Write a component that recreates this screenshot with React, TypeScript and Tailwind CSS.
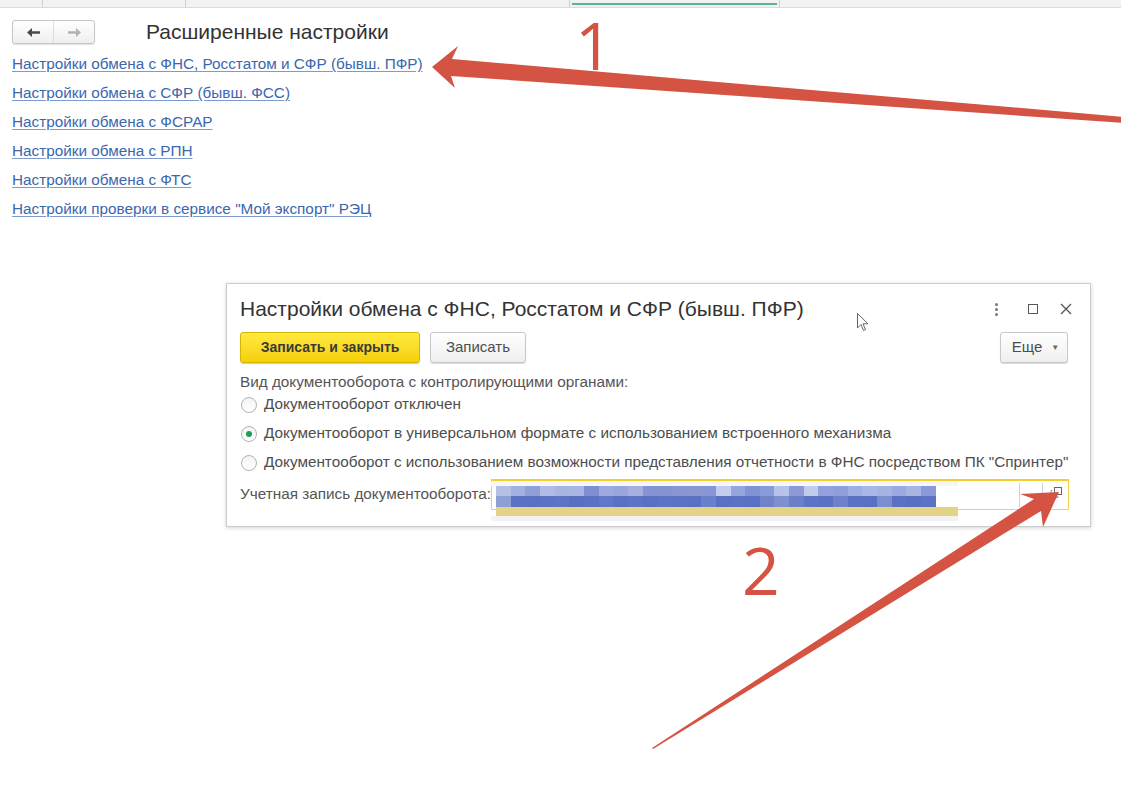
import React from 'react';

const links = [
    'Настройки обмена с ФНС, Росстатом и СФР (бывш. ПФР)',
    'Настройки обмена с СФР (бывш. ФСС)',
    'Настройки обмена с ФСРАР',
    'Настройки обмена с РПН',
    'Настройки обмена с ФТС',
    'Настройки проверки в сервисе "Мой экспорт" РЭЦ',
];

const radios = [
    { label: 'Документооборот отключен', checked: false },
    { label: 'Документооборот в универсальном формате с использованием встроенного механизма', checked: true },
    {
        label: 'Документооборот с использованием возможности представления отчетности в ФНС посредством ПК "Спринтер"',
        checked: false,
    },
];

// pixelated (blurred) account name
const topRow = [
    '#b4c0e6', '#a3b1e0', '#8fa0d8', '#b0bbe6', '#a8b4e2', '#a9b5e2', '#7f90d2', '#9eaadf', '#98a6dd', '#a5b0e0',
    '#8493d3', '#8593d2', '#8a96d4', '#8c97d2', '#8797d6', '#c2cdf0', '#95a6de', '#8093d5', '#8a9bd9', '#b7c3ea',
    '#8e9ad6', '#c0cbee', '#93a2dd', '#8e9fdb', '#9eb0e2', '#a8b8e6', '#a5b2e2', '#9aaae0', '#a8b4e2', '#8a9ad8',
];
const bottomRow = [
    '#8d9fd6', '#5b71c4', '#5a70c3', '#5d72c4', '#6074c4', '#5a6fc2', '#5c71c3', '#6278c6', '#5b70c3', '#5d73c5',
    '#5a70c3', '#5e73c4', '#5c72c4', '#5b70c3', '#6b80cb', '#5a70c3', '#5d72c4', '#5970c4', '#7083c9', '#7f90d0',
    '#6c80ca', '#5e74c5', '#5c71c3', '#6e82cb', '#5b71c4', '#5b70c3', '#7b8ecf', '#5c71c4', '#5a6fc2', '#5d72c4',
];

function NavArrow({ dir, dark }: { dir: 'left' | 'right'; dark: boolean }) {
    return (
        <svg width="13" height="9" viewBox="0 0 13 9" className={dir === 'right' ? 'rotate-180' : ''}>
            <path d="M0 4.5 L5 0 L5 3.2 L13 3.2 L13 5.8 L5 5.8 L5 9 Z" fill={dark ? '#4a4a4a' : '#b3b3b3'} />
        </svg>
    );
}

function Radio({ checked }: { checked: boolean }) {
    return (
        <span className="w-4 h-4 rounded-full border border-[#b3b3b3] bg-gradient-to-b from-[#f4f4f4] to-white flex items-center justify-center shrink-0">
            {checked && <span className="w-[6px] h-[6px] rounded-full bg-[#1f9d55]" />}
        </span>
    );
}

export default function App(): React.ReactElement {
    return (
        <div className="relative w-[1121px] h-[799px] overflow-hidden bg-white font-['Liberation_Sans',Arial,sans-serif] text-[#4d4d4d]">
            {/* tab strip */}
            <div className="flex h-[8px] bg-[#f2f2f2] border-b border-[#dadada]">
                <div className="w-[43px] border-r border-[#cfcfcf]" />
                <div className="w-[143px] border-r border-[#cfcfcf]" />
                <div className="w-[384px] border-r border-[#cfcfcf]" />
                <div className="w-[210px] border-r border-[#cfcfcf] px-[2px] pt-[3px]">
                    <div className="h-[2px] bg-[#5cb48c]" />
                </div>
            </div>

            <div className="pl-3 pt-[12px]">
                <div className="flex items-center h-[24px]">
                    <div className="flex h-[24px] w-[83px] rounded-[3px] border border-[#c6c6c6] bg-gradient-to-b from-white to-[#efefef] shadow-[0_1px_1px_rgba(0,0,0,0.12)]">
                        <div className="flex-1 flex items-center justify-center border-r border-[#dddddd]">
                            <NavArrow dir="left" dark />
                        </div>
                        <div className="flex-1 flex items-center justify-center">
                            <NavArrow dir="right" dark={false} />
                        </div>
                    </div>
                    <h1 className="ml-[51px] text-[21px] leading-[24px] text-[#333]">Расширенные настройки</h1>
                </div>

                <div className="flex flex-col mt-[5px]">
                    {links.map((l) => (
                        <a
                            key={l}
                            href="#"
                            className="h-[29px] leading-[29px] text-[15.3px] text-[#3b67ad] underline decoration-[#7d9bcc] underline-offset-2 w-max"
                        >
                            {l}
                        </a>
                    ))}
                </div>
            </div>

            {/* dialog */}
            <div className="relative ml-[226px] mt-[60px] w-[865px] h-[244px] bg-white border border-[#cccccc] shadow-[0_1px_4px_rgba(0,0,0,0.18)] pl-[13px] pr-[21px] text-[15.3px]">
                <div className="flex items-center mt-[11px] h-[28px]">
                    <h2 className="text-[21px] leading-[28px] text-[#333]">
                        Настройки обмена с ФНС, Росстатом и СФР (бывш. ПФР)
                    </h2>
                    <div className="ml-auto -mr-[5px] flex items-center text-[#666]">
                        <span className="flex flex-col gap-[2px] items-center w-[4px]">
                            <span className="w-[3px] h-[3px] rounded-full bg-[#777]" />
                            <span className="w-[3px] h-[3px] rounded-full bg-[#777]" />
                            <span className="w-[3px] h-[3px] rounded-full bg-[#777]" />
                        </span>
                        <span className="ml-[30px] w-[10px] h-[10px] border border-[#555]" />
                        <svg className="ml-[22px] mr-[2px]" width="12" height="12" viewBox="0 0 12 12">
                            <path d="M1 1 L11 11 M11 1 L1 11" stroke="#555" strokeWidth="1.3" />
                        </svg>
                    </div>
                </div>

                <div className="flex mt-[9px] h-[31px]">
                    <button className="w-[180px] h-[31px] rounded-[3px] border border-[#d6b400] bg-gradient-to-b from-[#ffea3d] to-[#f5d000] shadow-[0_1px_1px_rgba(0,0,0,0.2)] text-[14px] font-bold text-[#3a3a3a]">
                        Записать и закрыть
                    </button>
                    <button className="ml-[10px] w-[96px] h-[31px] rounded-[3px] border border-[#c8c8c8] bg-gradient-to-b from-white to-[#efefef] shadow-[0_1px_1px_rgba(0,0,0,0.15)] text-[15px] text-[#4d4d4d]">
                        Записать
                    </button>
                    <button className="ml-auto mr-[1px] w-[68px] h-[31px] rounded-[3px] border border-[#c8c8c8] bg-gradient-to-b from-white to-[#efefef] shadow-[0_1px_1px_rgba(0,0,0,0.15)] text-[15px] text-[#4d4d4d] flex items-center justify-center gap-[9px] pl-[3px]">
                        Еще
                        <span className="text-[8px] text-[#666]">▼</span>
                    </button>
                </div>

                <div className="mt-[10px] h-[17px] leading-[17px] text-[#555]">
                    Вид документооборота с контролирующими органами:
                </div>

                <div className="flex flex-col">
                    {radios.map((r) => (
                        <div key={r.label} className="flex items-center h-[29px] pl-[1px] gap-[7px]">
                            <Radio checked={r.checked} />
                            <span className="whitespace-nowrap">{r.label}</span>
                        </div>
                    ))}
                </div>

                <div className="flex items-center mt-[2px] h-[31px]">
                    <span className="w-[251px] shrink-0 whitespace-nowrap text-[#555]">Учетная запись документооборота:</span>
                    <div className="flex-1 h-[31px] border border-[#f2d34e] border-t-2 border-t-[#f7cf2a] flex justify-end">
                        <div className="w-[23px] border-l border-[#d4d4d4] my-[2px]" />
                        <div className="w-[26px] border-l border-[#d4d4d4] my-[2px] flex items-start justify-center pt-[4px]">
                            <svg width="12" height="12" viewBox="0 0 12 12">
                                <rect x="4.5" y="0.5" width="7" height="7" fill="none" stroke="#666" />
                                <path d="M2.5 3.5 H1 V10.5 H8 V9" fill="none" stroke="#999" />
                            </svg>
                        </div>
                    </div>
                </div>

                {/* blurred account name */}
                <div className="absolute left-[264px] top-[197px] w-[467px] flex flex-col">
                    <div className="h-[5px] bg-[#f6f6f6]" />
                    <div className="flex pl-[5px]">
                        {topRow.map((c, i) => (
                            <div key={i} className="h-[10px] w-[14.67px]" style={{ backgroundColor: c }} />
                        ))}
                    </div>
                    <div className="flex pl-[5px]">
                        {bottomRow.map((c, i) => (
                            <div key={i} className="h-[11px] w-[14.67px]" style={{ backgroundColor: c }} />
                        ))}
                    </div>
                    <div className="ml-[5px] h-[9px] bg-[#e3d387]" />
                    <div className="h-[5px] bg-[#f3f3f3]" />
                </div>

                {/* mouse pointer */}
                <svg className="absolute left-[630px] top-[29px]" width="12" height="19" viewBox="0 0 12 19">
                    <path d="M0.5 0.5 L0.5 15 L4 11.5 L6.5 17.5 L8.5 16.5 L6 10.8 L11 10.8 Z" fill="white" stroke="#666" strokeWidth="1" />
                </svg>
            </div>

            {/* annotations */}
            <svg className="absolute inset-0 pointer-events-none" width="1121" height="799" viewBox="0 0 1121 799">
                <polygon
                    points="432,67 458,46 452,59 1125,117 1125,123 451,76 455,88"
                    fill="#d45342"
                />
                <polygon points="652,748 1034,499 1020,494 1059,492 1043,527 1041,511 653,749" fill="#d45342" />
            </svg>
            <span className="absolute left-[575px] top-[11px] text-[66px] leading-none font-['Open_Sans',sans-serif] text-[#d45342]">
                1
            </span>
            <span className="absolute left-[742px] top-[536px] text-[66px] leading-none font-['Open_Sans',sans-serif] text-[#d45342]">
                2
            </span>
        </div>
    );
}
